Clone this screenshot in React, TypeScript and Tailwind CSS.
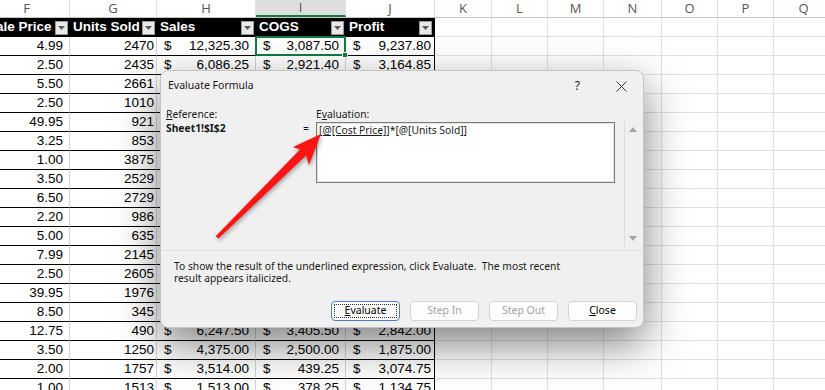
const headCols = [
  { l: "F", w: "w-[86px]" },
  { l: "G", w: "w-[87px]" },
  { l: "H", w: "w-[99px]" },
  { l: "I", w: "w-[90px]" },
  { l: "J", w: "w-[89px]" },
  { l: "K", w: "w-[57px]" },
  { l: "L", w: "w-[56px]" },
  { l: "M", w: "w-[56px]" },
  { l: "N", w: "w-[58px]" },
  { l: "O", w: "w-[56px]" },
  { l: "P", w: "w-[56px]" },
  { l: "Q", w: "w-[60px]" },
];

const emptyCols = headCols.slice(5);

const rows = [
  ["4.99", "2470", "12,325.30", "3,087.50", "9,237.80"],
  ["2.50", "2435", "6,086.25", "2,921.40", "3,164.85"],
  ["5.50", "2661", "14,635.50", "5,854.20", "8,781.30"],
  ["2.50", "1010", "2,525.00", "1,010.00", "1,515.00"],
  ["49.95", "921", "46,003.95", "18,401.58", "27,602.37"],
  ["3.25", "853", "2,772.25", "1,108.90", "1,663.35"],
  ["1.00", "3875", "3,875.00", "968.75", "2,906.25"],
  ["3.50", "2529", "8,851.50", "5,058.00", "3,793.50"],
  ["6.50", "2729", "17,738.50", "7,095.40", "10,643.10"],
  ["2.20", "986", "2,169.20", "867.68", "1,301.52"],
  ["5.00", "635", "3,175.00", "1,270.00", "1,905.00"],
  ["7.99", "2145", "17,138.55", "6,855.42", "10,283.13"],
  ["2.50", "2605", "6,512.50", "2,605.00", "3,907.50"],
  ["39.95", "1976", "78,941.20", "31,576.48", "47,364.72"],
  ["8.50", "345", "2,932.50", "1,173.00", "1,759.50"],
  ["12.75", "490", "6,247.50", "3,405.50", "2,842.00"],
  ["3.50", "1250", "4,375.00", "2,500.00", "1,875.00"],
  ["2.00", "1757", "3,514.00", "439.25", "3,074.75"],
  ["1.00", "1513", "1,513.00", "378.25", "1,134.75"],
];

function Dropdown() {
  return (
    <div className="ml-auto mr-[2px] flex h-[14px] w-[13px] shrink-0 items-center justify-center border border-[#9a9a9a] bg-[#e9e9e9]">
      <svg width="7" height="4" viewBox="0 0 7 4">
        <path d="M0 0h7L3.5 4z" fill="#5b5b5b" />
      </svg>
    </div>
  );
}

function Money({ v, w, sel }: { v: string; w: string; sel?: boolean }) {
  return (
    <div className={`${w} relative flex shrink-0 items-center justify-between border-b border-r border-b-black border-r-[#d4d4d4] pl-[7px] pr-[6px]`}>
      <span>$</span>
      <span>{v}</span>
      {sel && (
        <div className="absolute left-[-1px] top-[-1px] z-10 h-[20px] w-[91px] border-2 border-[#107c41]">
          <div className="absolute bottom-[-4px] right-[-4px] h-[6px] w-[6px] border border-white bg-[#107c41]" />
        </div>
      )}
    </div>
  );
}

function Sheet() {
  return (
    <div className="ml-[-16px] flex flex-col font-['Liberation_Sans',Arial,sans-serif] text-[13.5px] text-black">
      <div className="flex h-[18px] border-b border-[#c6c6c6] bg-white font-['Open_Sans',sans-serif] text-[13px] text-[#555]">
        {headCols.map((c) => (
          <div
            key={c.l}
            className={`${c.w} flex shrink-0 items-center justify-center border-r border-[#e1e1e1] ${c.l === "I" ? "border-b-2 border-b-[#107c41] bg-[#dedede]" : ""}`}
          >
            {c.l}
          </div>
        ))}
      </div>

      <div className="flex h-[19px]">
        {["Sale Price", "Units Sold", "Sales", "COGS", "Profit"].map((h, i) => (
          <div
            key={h}
            className={`${headCols[i].w} flex shrink-0 items-center bg-black pl-[3px] font-bold text-white ${i === 4 ? "border-r border-black" : ""}`}
          >
            <span className="whitespace-nowrap">{h}</span>
            <Dropdown />
          </div>
        ))}
        {emptyCols.map((c) => (
          <div key={c.l} className={`${c.w} shrink-0 border-b border-r border-[#e1e1e1]`} />
        ))}
      </div>

      {rows.map((r, i) => (
        <div key={i} className="flex h-[19px] leading-[18px]">
          <div className="w-[86px] shrink-0 border-b border-r border-b-black border-r-[#d4d4d4] pr-[6px] text-right">{r[0]}</div>
          <div className="w-[87px] shrink-0 border-b border-r border-b-black border-r-[#d4d4d4] pr-[2px] text-right">{r[1]}</div>
          <Money v={r[2]} w="w-[99px]" />
          <Money v={r[3]} w="w-[90px]" sel={i === 0} />
          <div className="flex w-[89px] shrink-0 items-center justify-between border-b border-r border-black pl-[7px] pr-[3px]">
            <span>$</span>
            <span>{r[4]}</span>
          </div>
          {emptyCols.map((c) => (
            <div key={c.l} className={`${c.w} shrink-0 border-b border-r border-[#e1e1e1]`} />
          ))}
        </div>
      ))}
    </div>
  );
}

function Btn({ children, off, focus }: { children: React.ReactNode; off?: boolean; focus?: boolean }) {
  return (
    <div
      className={`flex h-[20px] w-[69px] items-center justify-center rounded-[4px] border bg-[#fdfdfd] text-[10.5px] ${focus ? "border-[#4a7fc4]" : "border-[#d3d3d3]"} ${off ? "text-[#a3a3a3]" : "text-black"}`}
    >
      {focus ? (
        <span className="flex h-[14px] w-[63px] items-center justify-center border border-dotted border-[#333]">{children}</span>
      ) : (
        <span>{children}</span>
      )}
    </div>
  );
}

function Dialog() {
  return (
    <div className="absolute left-[160px] top-[70px] z-20 flex h-[258px] w-[484px] flex-col rounded-[8px] border border-[#c4c4c4] bg-[#f0f0f0] font-['Noto_Sans',sans-serif] text-[10.3px] text-[#1a1a1a] shadow-[0_16px_44px_rgba(0,0,0,0.5)]">
      <div className="flex h-[30px] shrink-0 items-center pl-[7px]">
        <span className="text-[10.5px]">Evaluate Formula</span>
        <span className="ml-auto text-[12px]">?</span>
        <svg className="ml-[36px] mr-[16px]" width="11" height="11" viewBox="0 0 11 11">
          <path d="M0.5 0.5l10 10M10.5 0.5l-10 10" stroke="#333" strokeWidth="1" />
        </svg>
      </div>

      <div className="flex h-[149px] shrink-0 pl-[5px] pt-[6px]">
        <div className="flex w-[135px] flex-col leading-[14px]">
          <span>
            <span className="underline">R</span>eference:
          </span>
          <span className="font-bold">Sheet1!$I$2</span>
        </div>
        <div className="mt-[14px] w-[10px] text-center leading-[14px]">=</div>
        <div className="ml-[5px] flex w-[299px] flex-col">
          <span className="h-[15px] leading-[14px]">
            E<span className="underline">v</span>aluation:
          </span>
          <div className="h-[61px] border border-[#7a7a7a] bg-white pl-[2px] pt-[1px] leading-[12px] shadow-[inset_0_0_0_1px_#e3e3e3]">
            <span className="underline underline-offset-[1px]">[@[Cost Price]]</span>*[@[Units Sold]]
          </div>
        </div>
        <div className="ml-[9px] mt-[14px] flex h-[126px] w-[17px] flex-col items-center justify-between border-l border-[#dcdcdc] py-[6px]">
          <svg width="8" height="5" viewBox="0 0 8 5">
            <path d="M0 5h8L4 0z" fill="#a6a6a6" />
          </svg>
          <svg width="8" height="5" viewBox="0 0 8 5">
            <path d="M0 0h8L4 5z" fill="#a6a6a6" />
          </svg>
        </div>
      </div>

      <div className="flex flex-1 flex-col border-t border-[#dedede] pl-[13px] pt-[9px]">
        <p className="leading-[12px]">
          To show the result of the underlined expression, click Evaluate.&nbsp; The most recent
          <br />
          result appears italicized.
        </p>
        <div className="mt-[17px] flex justify-end gap-[10px] pr-[6px]">
          <Btn focus>
            <span className="underline">E</span>valuate
          </Btn>
          <Btn off>Step In</Btn>
          <Btn off>Step Out</Btn>
          <Btn>
            <span className="underline">C</span>lose
          </Btn>
        </div>
      </div>
    </div>
  );
}

export default function App() {
  return (
    <div className="relative h-[390px] w-[825px] overflow-hidden bg-white">
      <Sheet />
      <Dialog />
      <svg
        className="pointer-events-none absolute left-0 top-0 z-30 h-[390px] w-[825px] drop-shadow-[1px_2px_2px_rgba(0,0,0,0.35)]"
        viewBox="0 0 825 390"
      >
        <polygon
          points="215.5,236.5 300,149.4 293,147 321,134 309,165 306,155.6 218.5,238.5"
          fill="#ff1414"
        />
      </svg>
    </div>
  );
}
